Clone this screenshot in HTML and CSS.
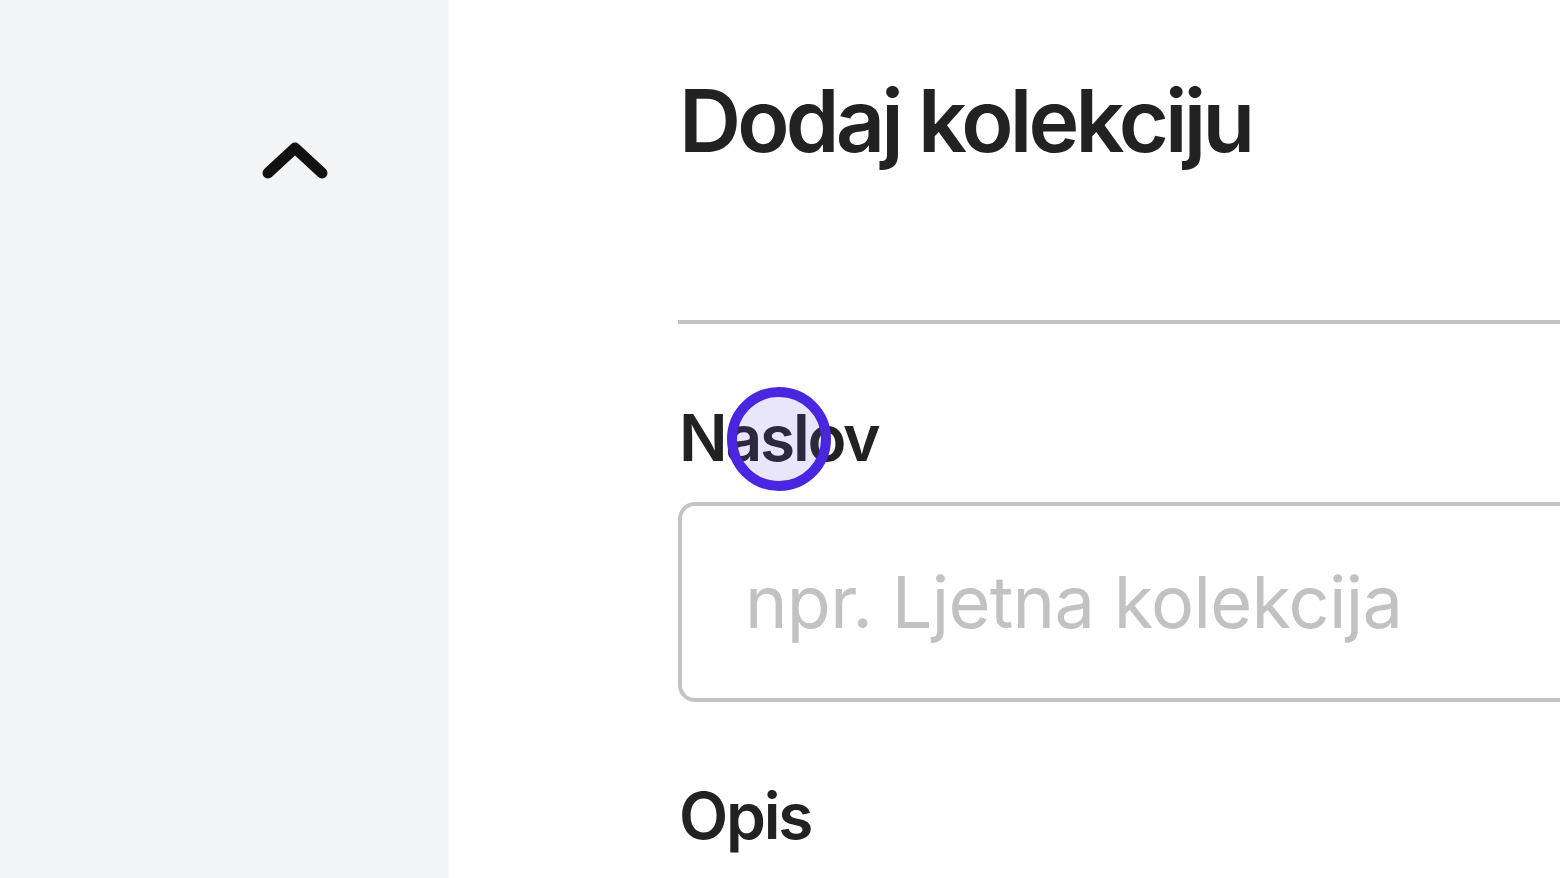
FILE: index.html
```html
<!DOCTYPE html>
<html lang="hr">
<head>
<meta charset="utf-8">
<title>Dodaj kolekciju</title>
<link rel="stylesheet" href="styles.css">
</head>
<body>
<div class="app">
  <aside class="sidebar">
    <div class="collapse" role="button" aria-label="Sakrij">
      <svg class="chev" width="70" height="44" viewBox="0 0 70 44"><path d="M8 35 L35 10 L62 35"/></svg>
    </div>
  </aside>
  <main class="main">
    <h1 class="title">Dodaj kolekciju</h1>
    <hr class="divider">
    <div class="field">
      <label class="label" for="naslov">Naslov</label>
      <span class="cursor"></span>
      <input class="input" id="naslov" type="text" placeholder="npr. Ljetna kolekcija">
    </div>
    <div class="field">
      <label class="label">Opis</label>
    </div>
  </main>
</div>
</body>
</html>
```
FILE: styles.css
```css
* { box-sizing: border-box; }
html, body { margin: 0; padding: 0; height: 100%; overflow: hidden; }
body { font-family: Inter, "Noto Sans", sans-serif; color: #1f1f1f; background: #fff; }
.app { display: flex; height: 878px; }
.sidebar { width: 449px; flex: none; background: #f3f4f6; padding: 138px 0 0 260px; }
.collapse { display: block; width: 70px; }
.chev { display: block; }
.chev path { fill: none; stroke: #111; stroke-width: 11px; stroke-linecap: round; stroke-linejoin: round; }
.main { flex: 1; padding: 70px 0 0 230px; min-width: 0; }
.title { margin: 0; font-size: 86px; line-height: 1.2; font-weight: 600; letter-spacing: -3.8px; color: #222; }
.divider { border: 0; border-top: 4px solid #c4c4c4; margin: 147px 0 0 -1px; }
.field { position: relative; padding-top: 76px; }
.label { display: block; font-size: 64px; line-height: 1.2; font-weight: 600; letter-spacing: -2.2px; color: #222; }
.input { display: block; width: calc(100% + 40px); height: 200px; margin: 25px 0 0 -1px; border: 4px solid #c4c4c4; border-radius: 17px; padding: 0 0 0 63px; font-family: inherit; font-size: 72px; letter-spacing: -0.7px; color: #222; background: #fff; outline: none; }
.input::placeholder { color: #c2c2c2; }
.cursor { position: absolute; left: 48px; top: 63px; width: 104px; height: 104px; border-radius: 50%; border: 10px solid #4a26e0; background: rgba(110, 90, 230, 0.15); }
```
